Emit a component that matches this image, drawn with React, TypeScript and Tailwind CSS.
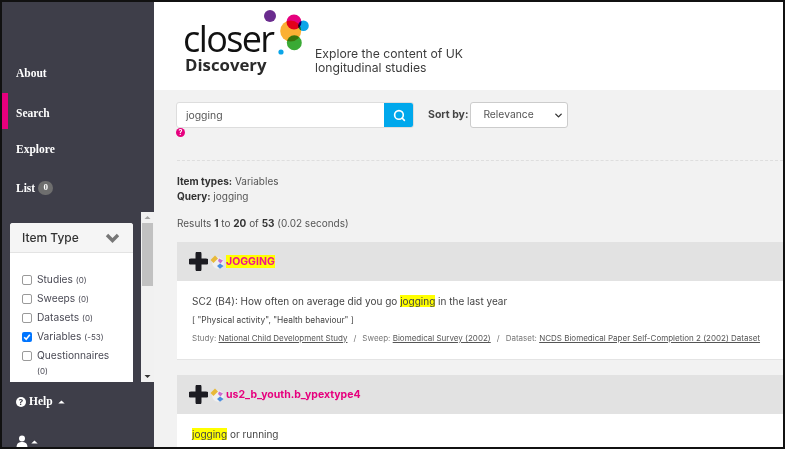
import React from 'react';
import { ChevronDown, Search } from 'lucide-react';

const FONT = "font-['Inter','Liberation_Sans',sans-serif]";

function Hit({ children }: { children: React.ReactNode }) {
  return <span className="bg-[#ffff00]">{children}</span>;
}

function Caret() {
  return (
    <svg width="7" height="4" viewBox="0 0 8 5" className="inline-block">
      <path d="M0 4.5 L4 0.5 L8 4.5 Z" fill="#fff" />
    </svg>
  );
}

function NavItem({ label, active, className, children }: { label: string; active?: boolean; className: string; children?: React.ReactNode }) {
  return (
    <div className={`flex items-center font-bold text-[11.5px] text-white font-['Liberation_Serif',serif] ${className}`}>
      <div className={`w-[6px] h-[36px] mr-[8px] ${active ? 'bg-[#e6007e]' : ''}`} />
      <span className={active ? 'pt-[6px]' : 'pt-[2px]'}>{label}</span>
      {children}
    </div>
  );
}

function Check({ label, count, checked }: { label: string; count: string; checked?: boolean }) {
  return (
    <div className="flex items-start min-h-[19px]">
      <span className={`w-[10px] h-[10px] mt-[3px] mr-[5px] rounded-[2px] shrink-0 flex items-center justify-center ${checked ? 'bg-[#0075ff]' : 'bg-white border border-[#9a9a9a]'}`}>
        {checked && (
          <svg width="8" height="8" viewBox="0 0 8 8">
            <path d="M1.2 4.2 L3.2 6.2 L6.8 1.8" stroke="#fff" strokeWidth="1.6" fill="none" />
          </svg>
        )}
      </span>
      <span className="text-[10.2px] leading-[15px] text-[#4a4a55]">
        {label} <span className="text-[8px]">{count}</span>
      </span>
    </div>
  );
}

function ItemIcons() {
  return (
    <>
      <svg width="19" height="19" viewBox="0 0 19 19" className="shrink-0">
        <path d="M9.5 2 V17 M2 9.5 H17" stroke="#1c1c22" strokeWidth="6" strokeLinecap="round" />
      </svg>
      <svg width="14" height="14" viewBox="0 0 14 14" className="ml-[2px] mr-[2px] shrink-0">
        <circle cx="8" cy="8" r="5.8" fill="#f0f0f0" />
        <path d="M0.5 5 L5 0.5 L8 3.5 L3.5 8 Z" fill="#e8b93a" />
        <path d="M9 3.5 L13 5.5 L10.5 8.5 L8 6 Z" fill="#c86fd0" />
        <path d="M10 8.5 L13.5 11 L10 13.8 L7 11 Z" fill="#4a8fe0" />
      </svg>
    </>
  );
}

export default function App() {
  return (
    <div className={`w-[785px] h-[449px] overflow-hidden flex bg-[#f2f2f2] border-2 border-[#111] ${FONT}`}>
      {/* sidebar */}
      <aside className="w-[152px] shrink-0 h-full bg-[#3e3e49] flex flex-col overflow-hidden">
        <div className="h-[53px] shrink-0" />
        <NavItem label="About" className="h-[36px] shrink-0" />
        <NavItem label="Search" active className="h-[36px] mt-[2px] shrink-0" />
        <NavItem label="Explore" className="h-[36px] mt-[2px] shrink-0" />
        <NavItem label="List" className="h-[36px] mt-[3px] shrink-0">
          <span className="ml-[3px] w-[15px] h-[14px] rounded-full bg-[#6e6e6e] text-[9px] flex items-center justify-center">0</span>
        </NavItem>

        <div className="flex h-[170px] mt-[6px] shrink-0">
          <div className="w-[138px] pt-[11px] pl-[8px]">
            <div className="w-[123px] h-[159px] bg-white rounded-t-[3px] overflow-hidden">
              <div className="h-[30px] bg-[#f5f5f5] border-b border-[#e3e3e3] flex items-center justify-between pl-[12px] pr-[13px]">
                <span className="text-[12px] font-medium text-[#333]">Item Type</span>
                <svg width="15" height="10" viewBox="0 0 15 10">
                  <path d="M2 2 L7.5 7.5 L13 2" stroke="#777" strokeWidth="3.4" fill="none" />
                </svg>
              </div>
              <div className="pl-[12px] pt-[19px] pr-[12px]">
                <Check label="Studies" count="(0)" />
                <Check label="Sweeps" count="(0)" />
                <Check label="Datasets" count="(0)" />
                <Check label="Variables" count="(-53)" checked />
                <Check label="Questionnaires" count="(0)" />
              </div>
            </div>
          </div>
          <div className="w-[13px] ml-[1px] bg-[#f1f1f1] flex flex-col items-center justify-between">
            <svg width="7" height="12" viewBox="0 0 7 12"><path d="M0.5 7 L3.5 4 L6.5 7 Z" fill="#a3a3a3" /></svg>
            <div className="w-[11px] h-[63px] bg-[#c1c1c1] -mt-[1px] mb-auto" />
            <svg width="7" height="12" viewBox="0 0 7 12"><path d="M0.5 5 L3.5 8 L6.5 5 Z" fill="#333" /></svg>
          </div>
        </div>

        <div className="flex items-center pl-[14px] mt-[12px] h-[16px] font-bold text-[11.5px] text-white font-['Liberation_Serif',serif] shrink-0">
          <span className="w-[10px] h-[10px] rounded-full bg-white text-[#3e3e49] text-[9px] flex items-center justify-center mr-[3px] font-sans">?</span>
          Help
          <span className="ml-[5px] flex"><Caret /></span>
        </div>
        <div className="flex items-center pl-[14px] mt-[25px] shrink-0">
          <svg width="12" height="13" viewBox="0 0 12 13">
            <circle cx="6" cy="3.5" r="3" fill="#fff" />
            <path d="M0.5 13 C0.5 8 3 7 6 7 C9 7 11.5 8 11.5 13 Z" fill="#fff" />
          </svg>
          <span className="ml-[3px] flex"><Caret /></span>
        </div>
      </aside>

      {/* main */}
      <main className="flex-1 min-w-0 flex flex-col">
        <header className="h-[88px] shrink-0 bg-white flex pl-[28px]">
          <div className="relative w-[133px] h-[88px]">
            <div className="absolute left-[1px] top-[21px] text-[36px] leading-[32px] tracking-[-1.6px] text-[#111] font-['Open_Sans',sans-serif]">closer</div>
            <div className="absolute left-[3px] top-[54px] text-[16.8px] leading-[18px] font-bold text-[#2a2a2a] font-['Open_Sans',sans-serif]">Discovery</div>
            <svg width="56" height="50" viewBox="0 0 56 50" className="absolute left-[75px] top-[6px]">
              <circle cx="13" cy="8" r="6" fill="#6a2c8e" />
              <circle cx="33.7" cy="23" r="10.5" fill="#fbb034" />
              <circle cx="37" cy="14" r="7.5" fill="#e6007e" className="mix-blend-multiply" />
              <circle cx="46.5" cy="17.7" r="5.3" fill="#0aa5e8" className="mix-blend-multiply" />
              <circle cx="37.3" cy="34.7" r="7.5" fill="#3aaa35" className="mix-blend-multiply" />
              <circle cx="24" cy="44" r="2.6" fill="#0aa5e8" />
            </svg>
          </div>
          <p className="mt-[45px] text-[12.2px] leading-[13.5px] text-[#3d3d3d]">
            Explore the content of UK
            <br />
            longitudinal studies
          </p>
        </header>

        <section className="pl-[23px] pt-[12px] flex-1 min-h-0">
          <div className="flex items-start -ml-[1px]">
            <div className="flex flex-col">
              <div className="flex w-[238px] h-[26px] rounded-[3px] overflow-hidden border border-[#ddd] bg-white">
                <div className="flex-1 pl-[9px] text-[10.4px] leading-[25px] text-[#555]">jogging</div>
                <div className="w-[30px] -my-px -mr-px bg-[#00a8ec] flex items-center justify-center">
                  <Search size={13} strokeWidth={3} className="text-white" />
                </div>
              </div>
              <span className="w-[9px] h-[9px] rounded-full bg-[#e6007e] text-white text-[7px] font-bold leading-[9px] text-center">?</span>
            </div>
            <span className="ml-[14px] mt-[5px] text-[10.5px] font-bold text-[#444]">Sort by:</span>
            <div className="ml-[2px] w-[98px] h-[26px] rounded-[3px] border border-[#ccc] bg-white flex items-center justify-between pl-[12px] pr-[3px]">
              <span className="text-[10.3px] text-[#555]">Relevance</span>
              <ChevronDown size={11} strokeWidth={3} className="text-[#333]" />
            </div>
          </div>

          <div className="mt-[23px] border-t border-dashed border-[#dedede]" />

          <div className="mt-[13px] text-[10px] leading-[15px] text-[#555]">
            <div><b className="text-[#333]">Item types:</b> Variables</div>
            <div><b className="text-[#333]">Query:</b> jogging</div>
          </div>
          <div className="mt-[12px] text-[10px] leading-[15px] text-[#555]">
            Results <b className="text-[#333]">1</b> to <b className="text-[#333]">20</b> of <b className="text-[#333]">53</b> (0.02 seconds)
          </div>

          <article className="mt-[11px] bg-white border-b border-[#e4e4e4]">
            <div className="h-[39px] bg-[#e2e2e2] flex items-center pl-[12px]">
              <ItemIcons />
              <span className="text-[10.5px] font-bold text-[#f0148c]"><Hit>JOGGING</Hit></span>
            </div>
            <div className="h-[78px] pl-[15px] pt-[13px]">
              <div className="text-[10px] leading-[15px] text-[#444]">
                SC2 (B4): How often on average did you go <Hit>jogging</Hit> in the last year
              </div>
              <div className="mt-[5px] text-[8.4px] leading-[12px] text-[#444]">[ "Physical activity", "Health behaviour" ]</div>
              <div className="mt-[6px] text-[8px] leading-[12px] text-[#777] whitespace-nowrap">
                Study: <span className="underline text-[#555]">National Child Development Study</span>
                <span className="mx-[6px]">/</span>
                Sweep: <span className="underline text-[#555]">Biomedical Survey (2002)</span>
                <span className="mx-[6px]">/</span>
                Dataset: <span className="underline text-[#555]">NCDS Biomedical Paper Self-Completion 2 (2002) Dataset</span>
              </div>
            </div>
          </article>

          <article className="mt-[15px] bg-white">
            <div className="h-[39px] bg-[#e2e2e2] flex items-center pl-[12px]">
              <ItemIcons />
              <span className="text-[10.5px] font-bold text-[#e6007e]">us2_b_youth.b_ypextype4</span>
            </div>
            <div className="pl-[15px] pt-[13px] pb-[20px] text-[10px] leading-[15px] text-[#444]">
              <Hit>jogging</Hit> or running
            </div>
          </article>
        </section>
      </main>
    </div>
  );
}
